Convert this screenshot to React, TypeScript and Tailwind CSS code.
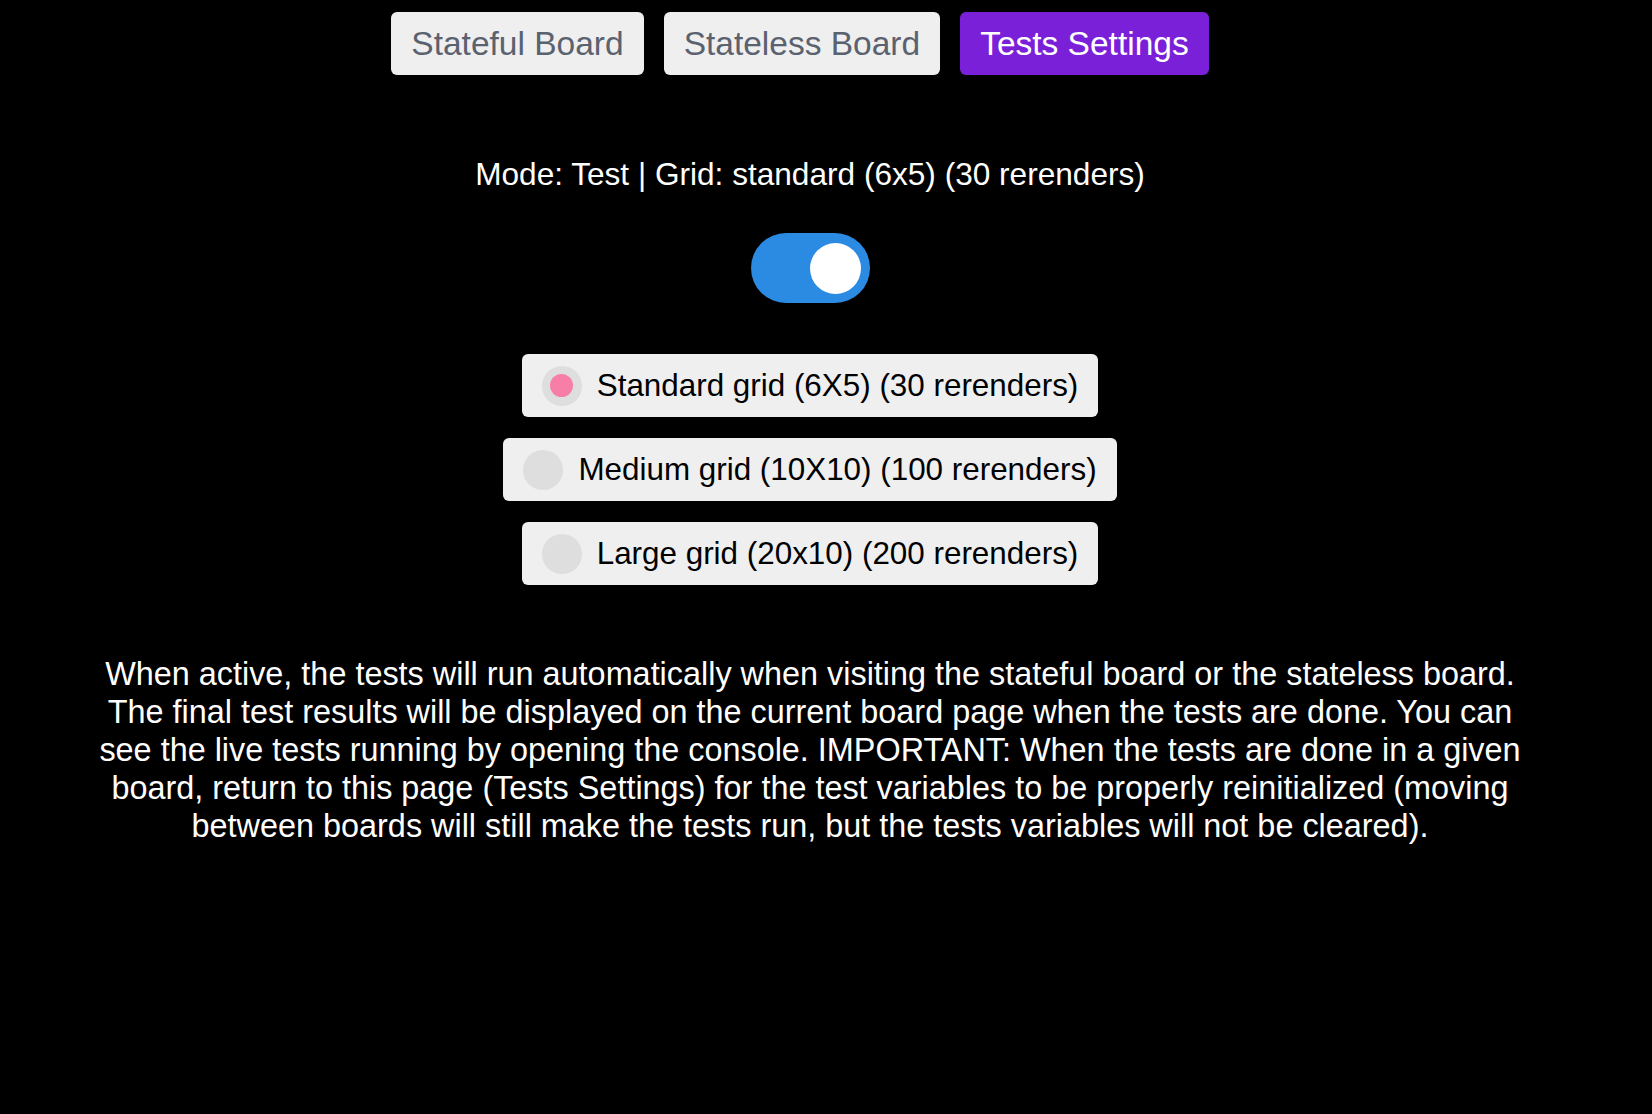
import React, { useState } from 'react';

const tabs = ['Stateful Board', 'Stateless Board', 'Tests Settings'];

const grids = [
  { id: 'standard', label: 'Standard grid (6X5) (30 rerenders)', short: 'standard (6x5) (30 rerenders)' },
  { id: 'medium', label: 'Medium grid (10X10) (100 rerenders)', short: 'medium (10x10) (100 rerenders)' },
  { id: 'large', label: 'Large grid (20x10) (200 rerenders)', short: 'large (20x10) (200 rerenders)' },
];

export default function App() {
  const [tab, setTab] = useState('Tests Settings');
  const [testMode, setTestMode] = useState(true);
  const [grid, setGrid] = useState('standard');

  const current = grids.find(g => g.id === grid)!;

  return (
    <div className="min-h-screen bg-black pr-[32px] font-['Liberation_Sans',Arial,sans-serif]">
      <nav className="flex justify-center gap-[20px] pr-[20px] pt-[12px]">
        {tabs.map(t => (
          <button
            key={t}
            onClick={() => setTab(t)}
            className={`h-[63px] px-[20px] rounded-[6px] text-[33.5px] leading-none ${
              tab === t ? 'bg-[#7b20d9] text-white' : 'bg-[#efefef] text-[#5a6270]'
            }`}
          >
            {t}
          </button>
        ))}
      </nav>

      <p className="mt-[81px] text-center text-[31.6px] leading-[36px] text-white">
        Mode: {testMode ? 'Test' : 'Normal'} | Grid: {current.short}
      </p>

      <div className="mt-[41px] flex justify-center">
        <button
          onClick={() => setTestMode(!testMode)}
          className={`flex h-[70px] w-[119px] items-center rounded-full px-[9px] ${
            testMode ? 'justify-end bg-[#2b8ae2]' : 'justify-start bg-[#cccccc]'
          }`}
          aria-label="Toggle test mode"
        >
          <span className="h-[51px] w-[51px] rounded-full bg-white" />
        </button>
      </div>

      <div className="mt-[51px] flex flex-col items-center gap-[21px]">
        {grids.map(g => (
          <label
            key={g.id}
            onClick={() => setGrid(g.id)}
            className="flex h-[63px] cursor-pointer items-center gap-[15px] rounded-[6px] bg-[#efefef] pl-[20px] pr-[20px]"
          >
            <span className="flex h-[40px] w-[40px] items-center justify-center rounded-full bg-[#dedede]">
              {grid === g.id && <span className="h-[23px] w-[23px] rounded-full bg-[#f77fa7]" />}
            </span>
            <span className="text-[31.4px] leading-none text-black">{g.label}</span>
          </label>
        ))}
      </div>

      <p className="mx-auto mt-[70px] w-[1432px] text-center text-[32.4px] leading-[38px] text-white">
        When active, the tests will run automatically when visiting the stateful board or the stateless board. The
        final test results will be displayed on the current board page when the tests are done. You can see the live
        tests running by opening the console. IMPORTANT: When the tests are done in a given board, return to this page
        (Tests Settings) for the test variables to be properly reinitialized (moving between boards will still make the
        tests run, but the tests variables will not be cleared).
      </p>
    </div>
  );
}
